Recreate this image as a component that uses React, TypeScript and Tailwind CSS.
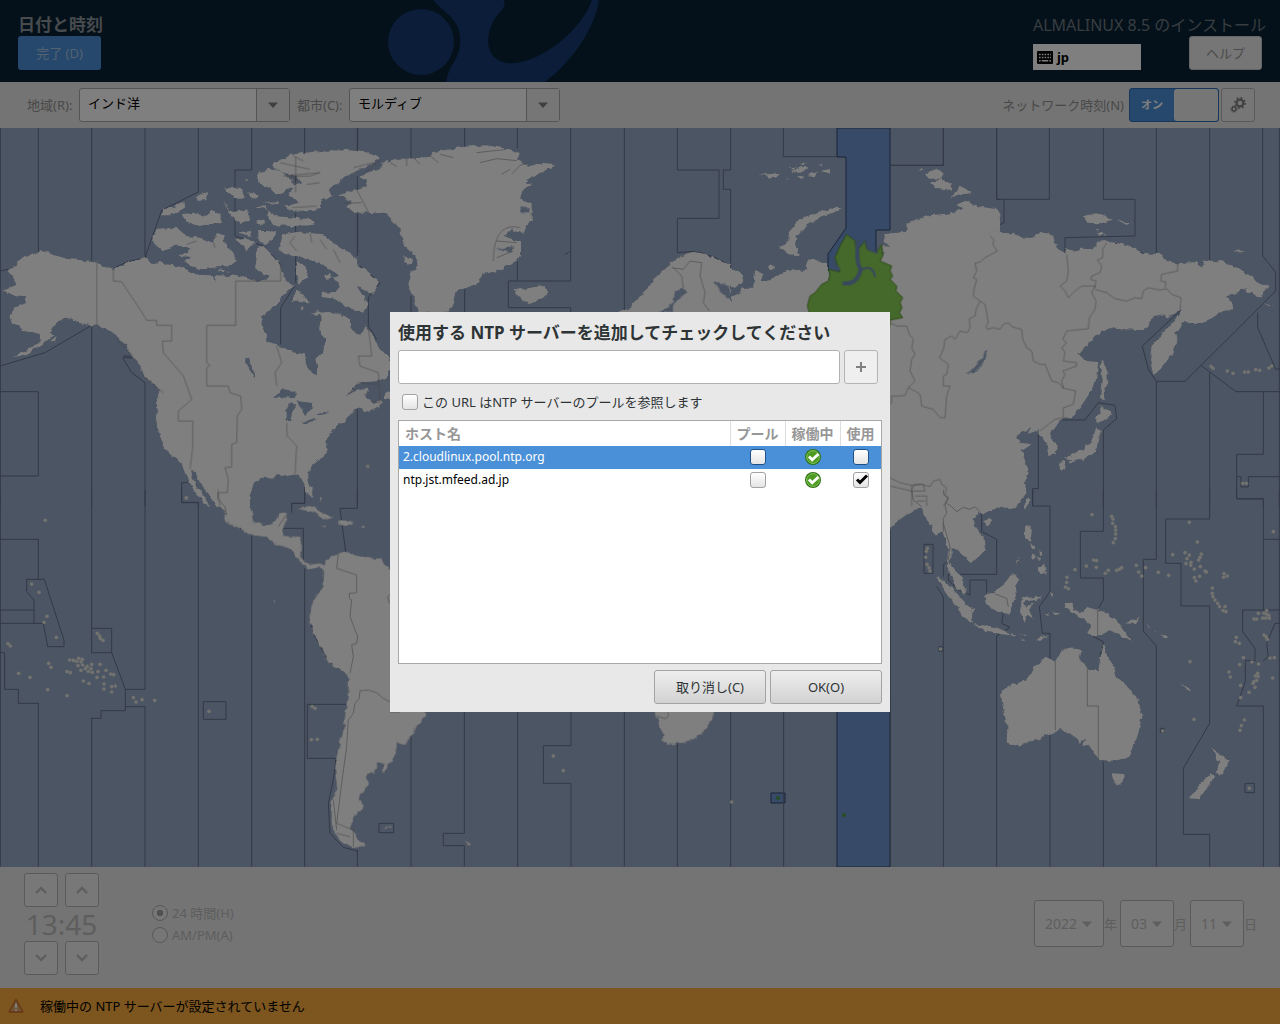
import React, { useState } from "react";

type Region = {
  at: string;
  land: string[];
  water?: string;
  zones: string;
  borders?: string;
  dots?: number[][];
};

/* Each region is drawn at three units per map pixel. */
const regions: Region[] = [
  {
    at: "translate(0 126) scale(0.33333)",
    land: [
      "M25,432 L55,418 L50,408 L75,390 L100,385 L115,378 L128,374 L140,382 L165,388 L200,398 L240,402 L290,410 L320,422 L340,428 L365,420 L380,410 L410,402 L425,400 L435,395 L445,405 L460,415 L480,405 L500,415 L540,420 L560,432 L575,440 L600,442 L640,440 L650,432 L665,430 L700,445 L735,455 L770,465 L800,460 L810,450 L780,440 L765,425 L770,400 L765,380 L775,365 L790,360 L805,375 L825,395 L840,415 L845,440 L855,462 L885,478 L870,490 L845,515 L820,545 L800,555 L785,575 L785,600 L795,620 L800,645 L830,655 L860,670 L885,680 L915,685 L918,715 L935,740 L950,745 L952,725 L945,700 L965,680 L975,665 L975,640 L960,620 L955,600 L965,580 L960,560 L985,558 L1010,560 L1030,570 L1050,580 L1055,605 L1070,625 L1090,620 L1100,600 L1110,620 L1125,640 L1135,665 L1150,680 L1170,690 V740 L1155,755 L1135,765 L1100,768 L1080,770 L1060,785 L1040,810 L1070,790 L1105,785 L1100,800 L1100,815 L1120,830 L1145,825 L1150,832 L1120,850 L1095,862 L1090,845 L1070,850 L1045,868 L1035,885 L1010,900 L985,925 L975,945 L985,960 L980,980 L960,1000 L935,1020 L925,1045 L925,1065 L935,1090 L935,1110 L920,1105 L912,1075 L905,1055 L890,1045 L860,1050 L830,1048 L815,1060 L785,1058 L760,1070 L752,1090 L750,1145 L655,1145 L640,1125 L620,1100 L600,1070 L585,1040 L570,1028 L575,1050 L590,1080 L610,1110 L625,1140 L612,1135 L600,1110 L580,1090 L565,1060 L550,1020 L530,1000 L510,985 L495,970 L485,940 L475,915 L468,880 L472,850 L470,820 L480,790 L450,765 L435,750 L430,740 L410,700 L395,690 L380,660 L350,630 L325,610 L300,600 L275,598 L235,590 L215,578 L195,575 L175,585 L160,605 L150,620 L160,628 L145,640 L120,660 L95,675 L70,690 L40,692 L100,660 L118,650 L120,628 L95,620 L70,615 L60,600 L35,590 L28,570 L45,545 L75,530 L78,512 L50,512 L10,495 L30,485 L50,475 L40,455 Z",
      "M820,110 L880,85 L960,75 L1040,72 L1110,80 L1140,95 L1120,110 L1080,130 L1040,150 L1010,175 L985,190 L995,210 L960,225 L960,250 L900,255 L860,250 L850,240 L900,230 L880,215 L865,205 L880,190 L860,180 L905,170 L890,150 L850,140 L820,125Z",
      "M768,150 L800,125 L840,135 L875,160 L885,175 L860,190 L850,205 L820,200 L800,180 L780,180Z",
      "M490,255 L550,230 L555,245 L520,265 L485,265Z M585,210 L625,198 L620,222 L590,225Z",
      "M545,265 L580,260 L615,270 L635,248 L665,270 L665,288 L600,300 L560,290Z",
      "M680,250 L700,258 L745,250 L750,285 L720,288 L700,275Z M670,185 L720,185 L735,215 L705,215Z M745,198 L780,210 L770,220 L750,212Z M765,245 L800,248 L790,238Z M728,160h12v6z M668,225 L690,252 L680,245Z M790,228 L835,225 L830,235Z",
      "M805,250 L825,270 L880,275 L940,280 L940,298 L880,300 L820,298 L805,275Z M770,280 L795,285 L790,297 L770,292Z",
      "M470,308 L530,305 L560,330 L530,355 L510,365 L490,378 L465,355 L455,345Z",
      "M530,345 L560,330 L600,335 L640,350 L650,325 L675,325 L670,345 L700,380 L710,405 L690,420 L640,425 L600,432 L550,405 L575,392 L535,390 L575,370 L530,358Z",
      "M705,340 L735,335 L770,350 L740,370Z M715,322 L755,318 L750,332Z M775,315 L825,315 L820,340 L795,358 L775,335Z",
      "M835,370 L850,325 L890,318 L970,325 L1010,360 L1060,385 L1080,420 L1110,445 L1140,470 L1120,505 L1070,480 L1105,535 L1090,560 L1060,550 L1020,530 L1000,515 L965,510 L965,500 L1010,498 L1020,480 L1000,455 L1020,450 L960,410 L920,400 L860,385Z",
      "M890,405 L925,430 L920,455 L895,475 L885,430Z M870,530 L895,495 L930,530 L900,525Z M970,450 L990,440 L995,455 L975,458Z M900,550 l12,-6 2,8z M935,562 l20,-6 12,6 -16,4z",
      "M150,645 l20,-15 -5,20Z M1155,800 L1170,795 V820 L1155,815Z M960,1115 l4,8 -3,6z",
    ],
    water:
      "M815,815 L850,790 L885,795 L890,812 L850,815Z M890,825 L935,830 L940,845 L915,870 L905,850Z M870,830 L885,835 L870,885 L860,885 L860,850Z M905,888 L950,875 L940,885 L915,892Z M950,865 L985,855 L975,865 L955,868Z M735,700 L748,698 L765,745 L765,758 L750,735Z M560,430 L640,436 L700,440 L690,450 L648,448 L645,470 L638,448 L590,446Z M740,430 L770,438 L765,452 L745,448Z",
    zones:
      "M1,6V1140 M115,6V378 M0,797H115V1050H0 M275,6V405 M435,6V395 M595,6V198L485,253L435,395 M755,6V132H705V330L790,360L842,415 M914,6V92H887V170 M1072,6V75 M1072,150V390 M0,720L135,680L275,598V1140 M370,695H405 M368,695L395,740L435,770V1140 M575,1070H545V1130H595V1140 M1072,850V1140 M914,1060V1132H875V1140 M1080,420L1140,470L1105,515V600L1130,640 M842,655V545L885,478 M340,428L380,408L435,395 M887,260V470 M0,435L25,430 M340,610L405,670V690H370",
    borders:
      "M290,410V598 M340,428V465L365,467L380,490L420,550L440,583L470,583V598H515V645H487L490,680L550,750L575,820L535,855V885H578V965L570,1028 M842,415V465H707V598H620V710L630,718L620,725V780H685L690,800L722,810L725,850L712,870L710,950L695,955V1023L675,1025L685,1060L682,1100L655,1100L660,1140 M830,660L845,710L825,740L830,780 M860,890L862,930L890,960L885,1045 M887,92V200 M1105,600L1115,690L1075,690L1080,720L1135,740L1140,830L1110,825 M1040,810L1075,770L1140,775 M840,110L930,130 M850,150L960,140L930,150L860,152 M1060,125L1120,110 M920,175L960,170 M880,90L910,105 M885,330L870,350L890,375 M960,340L980,370 M930,320L935,350 M640,350L645,365 M590,345L560,355 M1000,370L1020,410 M350,640L400,690 M430,750L490,800 M875,245L950,240",
    dots: [[1103, 1021], [559, 1115]],
  },
  {
    at: "translate(330 126) scale(0.33333)",
    land: [
      "M28,208 L60,195 L85,188 L110,180 L110,160 L88,158 L110,140 L150,130 L155,110 L200,98 L240,98 L300,92 L310,78 L360,70 L400,62 L470,58 L530,68 L570,85 L560,100 L600,120 L640,110 L675,115 L640,140 L600,155 L590,165 L605,175 L580,195 L570,220 L605,235 L605,285 L590,300 L580,325 L545,310 L520,330 L570,345 L570,390 L555,410 L500,435 L460,445 L440,475 L400,488 L375,500 L370,530 L350,560 L265,560 L255,530 L235,480 L240,440 L265,420 L250,380 L225,360 L210,310 L190,285 L170,265 L120,258 L80,262 L50,245 L65,228Z",
      "M220,390 L250,400 L245,415 L222,408Z",
      "M550,485 L575,490 L600,485 L640,480 L655,498 L640,515 L600,532 L570,520 L560,500Z",
      "M865,560 L900,545 L940,500 L970,460 L1010,425 L1030,405 L1060,385 L1090,378 L1130,385 L1160,400 L1200,418 V600 H860Z",
    ],
    water:
      "M990,560 L1030,525 L1035,495 L1060,488 L1072,498 L1050,515 L1030,535 L1028,560Z M1148,465 L1200,480 V520 L1175,500Z M570,240 L600,245 L600,262 L575,262Z M585,190 L605,195 L595,225 L580,210Z M500,370 L550,360 L540,380Z",
    zones:
      "M83,6V75 M83,262V380 M243,6V95 M243,510V560 M404,6V62 M404,490V560 M562,6V68 M562,405V465 M722,6V465H535V545H722V560 M883,6V560 M1042,6V132H1167V277H1042V380L1090,376L1150,392L1200,418 M705,385L718,378",
    borders:
      "M78,188L115,258 M490,405C490,340 510,290 570,305 M1025,425 L1060,430 L1080,405 L1115,410 L1110,450 L1125,500 L1120,530 L1138,555 M1030,425L1055,450L1060,485 M450,110L500,98L560,104 M545,145L570,118L590,112 M180,110L200,122 M230,98V120 M250,95L270,115 M295,85L325,110 M330,85L370,95 M440,80L530,70 M500,345L560,350 M500,395L550,375 M45,232L95,230 M150,102L105,140 M515,145L540,130",
  },
  {
    at: "translate(700 126) scale(0.33333)",
    land: [
      "M0,385 L30,395 L90,425 L125,445 L130,465 L110,482 L70,478 L40,465 L65,490 L65,505 L95,525 L95,512 L120,500 L125,485 L160,485 L165,435 L190,445 L180,465 L200,465 L260,435 L320,430 L325,400 L380,412 L388,440 L390,470 L545,470 L540,410 L555,415 L560,390 L540,360 L572,362 L555,325 L620,318 L620,290 L680,272 L770,260 L795,245 L770,235 L800,225 L830,240 L900,262 V600 H0Z",
      "M240,365 L265,345 L265,320 L300,280 L350,260 L410,242 L425,250 L370,270 L320,295 L290,330 L285,355 L300,388 L265,385Z",
      "M175,145 l40,0 -10,5z M205,145 L240,140 L225,155 L200,156Z M270,137 l35,-14 20,0 -15,14z M325,147 l25,-10 -8,14z M360,135 l28,-6 -2,12z M290,155 l22,-5 -3,12z M265,128 l25,-5 -10,8z M300,118 l20,-8 -6,10z M252,155h10v4z M355,113h14v4z",
      "M205,423 a10,8 0 1,0 20,0 a10,8 0 1,0 -20,0Z",
    ],
    zones: "M92,6V132H70V190H92V425L0,378 M250,6V92H412 M572,118H730V6 M890,6V220H900",
  },
  {
    at: "translate(880 126) scale(0.33333)",
    land: [
      "M10,325 L80,318 L80,290 L150,268 L215,262 L250,248 L230,238 L255,225 L290,240 L350,250 L365,270 L350,290 L275,340 L350,300 L360,320 L400,322 L430,335 L465,335 L475,320 L520,328 L530,365 L555,385 L560,368 L580,375 L600,368 L640,370 L650,348 L680,345 L745,358 L790,382 L845,385 L860,405 L890,412 L950,408 L965,425 L975,402 L1035,408 L1080,430 L1120,455 L1130,470 L1170,480 L1150,500 L1145,515 L1110,500 L1080,485 L1070,505 L1035,510 L1055,525 L1060,550 L1030,555 L990,580 L960,590 L910,592 L885,620 L890,645 L875,685 L850,720 L820,750 L810,700 L815,660 L860,610 L890,575 L905,550 L860,578 L855,565 L825,570 L800,605 L780,612 L700,608 L665,615 L635,640 L595,685 L620,705 L655,708 L648,760 L630,800 L600,845 L575,872 L545,880 L510,925 L530,955 L528,985 L505,990 L500,955 L480,925 L478,912 L440,925 L455,902 L405,935 L420,950 L455,955 L425,975 L445,1030 L435,1070 L440,1100 L405,1145 H0 V395 L15,380 L30,362 L12,345Z",
      "M138,145 L170,128 L190,145 L185,158 L150,158Z M150,170 L185,160 L215,175 L212,192 L165,185Z M215,212 L240,180 L275,198 L250,208Z M110,129h16v3z",
      "M612,270 L645,262 L680,270 L695,282 L660,292 L620,290Z M710,282 L758,290 L735,293Z M650,318 L680,325 L660,330Z M645,309h10v5z",
      "M1057,380 L1075,370 L1095,378Z M1150,532 l35,8 -20,-1z",
      "M668,700 L680,730 L685,775 L670,790 L675,825 L663,820 L668,760 L660,720Z",
      "M660,838 L700,865 L680,880 L650,892 L645,875 L662,865Z",
      "M650,900 L662,915 L655,950 L640,980 L605,1000 L570,1000 L555,995 L600,975 L635,945Z",
      "M536,1008 L557,1005 L552,1030 L542,1034Z M565,1005 L592,1000 L572,1016Z M438,1122 L448,1115 L440,1145Z",
    ],
    water: "M318,672 C325,705 295,745 260,742 C290,728 300,700 318,672Z M320,325 L370,305 L340,318Z",
    zones:
      "M30,118H190V6 M350,6V220H508V6 M372,220V290L275,338 M670,6V220H765V330L555,335V385 M829,6V380 M989,6V405 M1148,6V390L1187,438V495L915,766H829L805,730L787,660L905,550 M829,766V1140 M963,718L1068,797H1200 M989,740V1140 M1133,560V605L1187,730L1200,728 M1150,797V985H1070V1052H1083V1083H1105V1052H1200 M1070,1052V1118H1150V1140 M545,882H615L655,830L705,838L710,878L670,912V1140 M475,925V1088H458V1140 M1198,6V1140 M700,350L790,382",
    borders:
      "M330,330L342,342L338,355L352,375L315,395L300,408L285,412L290,435L280,455L290,460L282,490L280,510L300,525L315,535L320,560L325,590L318,600L322,610L340,605L360,610L370,595L385,590L395,602L425,610L428,640L440,665L455,675L460,705L480,715L495,715L515,765L535,770L550,785L545,765L555,745L548,735L590,720V710L550,705L555,680L545,665L560,650L548,640L560,615L625,608L628,575L645,550L648,525L635,500L645,480L605,480L585,495L565,515L555,495L540,480L560,465L565,435L560,385 M645,490L680,500L705,518L740,525L765,515L785,518L790,495L805,485L840,492L860,488L875,505L903,515L900,555 M680,350L668,370L668,395L652,402L665,420L660,440L635,450L632,460L648,465L645,485 M893,410V435L845,445L842,465L858,468L855,485 M300,525L288,550L285,570L268,578L270,605L262,620L240,615L225,640L215,630L195,640L190,670L178,695L205,715L200,745L190,750V780H210L200,810L195,875L180,875L160,850L125,840L120,805L105,795L85,785L75,808L60,810H35V830L30,835 M30,590L50,600L80,600L88,625L100,640L95,665L105,685L95,700L90,735L105,765L85,785 M545,785L587,795L580,835L550,845V875L525,880L505,895L480,915 M30,1055L60,1070L95,1078L125,1075L150,1082L160,1065L180,1060L185,1075L200,1085L195,1105L205,1115L190,1140 M95,1078V1140 M30,1080L95,1095L135,1095L130,1075H105L95,1090 M105,1110H140V1140 M110,1125H135",
    dots: [[993, 721], [999, 727], [1042, 735], [1059, 742], [1094, 738], [1105, 738], [1127, 731], [1139, 733], [1167, 726], [1175, 720], [1088, 1072], [1099, 1072]],
  },
  {
    at: "translate(880 490) scale(0.33333)",
    land: [
      "M0,-10 L430,-10 L425,10 L400,30 L350,50 L330,65 L300,68 L275,90 L290,120 L310,140 L315,175 L295,200 L275,220 L240,185 L215,172 L215,200 L205,215 L240,255 L260,300 L250,312 L225,290 L200,225 L205,180 L190,125 L165,138 L155,110 L130,70 L125,50 L100,65 L60,85 L30,120 L0,120Z",
      "M310,97 L325,86 L334,94 L322,108Z M445,22 L450,32 L438,60 L432,45Z",
      "M168,262 L195,275 L235,315 L280,365 L278,398 L250,380 L215,330Z",
      "M280,402 L340,410 L375,422 L388,436 L320,425Z",
      "M315,312 L340,310 L370,285 L395,252 L418,268 L405,290 L408,320 L385,372 L340,362 L320,340Z",
      "M425,325 L480,320 L487,312 L480,328 L432,335 L438,352 L458,340 L447,362 L462,388 L442,374 L434,398 L420,365Z",
      "M435,108 L455,110 L455,130 L450,152 L435,145Z M470,240 L492,218 L498,250 L480,252Z M450,160 l12,5 -5,12z M478,178 l10,12 -8,6z M455,190 l12,8 -8,12z M472,198 l10,6 -8,10z M425,202 L405,225 L412,212Z",
      "M468,450 L505,432 L480,454Z M390,430 L412,434 L390,437Z M415,434h22v4z M418,444 l20,6 -8,3z M495,370h12v5z M515,366 l30,6 -20,3z M510,305 l10,8 -4,14z M272,350 l14,10 -6,6z",
      "M550,340 L578,338 L580,355 L600,370 L620,350 L680,370 L715,400 L755,455 L715,435 L690,420 L650,440 L625,430 L630,405 L595,378 L570,365Z",
      "M735,400 L780,382 L765,402Z M800,402 l12,10 -6,-2z M822,418 l8,8 -4,-1z M840,435 l20,-2 6,12 -8,-4z",
      "M362,605 L395,585 L440,570 L465,530 L500,500 L525,515 L545,480 L560,472 L605,480 L598,510 L630,540 L655,540 L668,462 L685,505 L700,525 L710,560 L745,590 L775,630 L787,680 L775,730 L748,803 L700,812 L655,810 L630,770 L610,765 L618,745 L600,760 L580,735 L545,720 L505,732 L470,750 L400,768 L380,755 L382,710 L368,650Z",
      "M695,850 L732,852 L727,872 L712,887 L702,875Z",
      "M995,768 L1020,798 L1052,808 L1022,857 L1005,845 L1018,820Z",
      "M990,850 L1005,858 L960,928 L930,925 L950,895Z",
      "M903,578 L932,600 L926,604Z",
    ],
    zones:
      "M31,120V1130 M170,290L190,320V1130 M350,438V1130 M458,0V48H510V305L478,350L487,430H510V1130 M670,0V124H601V264H670V330L655,355 M670,815V1130 M829,0V208H790V423L829,468V1130 M989,0V87H857V220H903V348H989V700L910,835V1033H989V1130 M1070,0V27H1150V360 M1150,148H1200 M1200,360H1088V425L1125,475V512H1096V575L1070,648H1150V1130 M1150,512L1165,500L1160,460L1185,400H1200 M132,163H159V250H132Z M305,70V125L350,148V253H205V270L235,300L270,315V270H320V310 M1095,880H1123V908H1095Z M841,715H852V727H841Z M177,470H187V484H177Z M1198,0V1130 M370,370L365,400L390,412L350,438 M190,260V225L200,215 M640,440L670,455L660,500",
    borders:
      "M526,515V720 M622,530V648H655V810 M653,358V440 M95,0L100,30L125,50 M190,0L192,15L205,25L195,45L200,70L190,85V125 M200,40L215,50L230,65L250,52L270,58L285,50L300,65 M345,312L380,325L385,350 M190,100L210,170L205,210",
    dots: [[636, 74], [695, 79], [699, 87], [698, 100], [706, 110], [707, 120], [707, 132], [706, 146], [700, 158], [641, 210], [650, 212], [619, 228], [649, 232], [585, 239], [561, 262], [560, 277], [556, 291], [565, 296], [676, 250], [685, 241], [710, 241], [718, 238], [725, 233], [769, 226], [797, 233], [776, 246], [785, 258], [835, 247], [866, 256], [878, 194], [928, 97], [952, 156], [915, 188], [928, 195], [921, 206], [933, 217], [918, 221], [932, 226], [964, 192], [960, 202], [956, 210], [943, 237], [961, 230], [975, 243], [979, 246], [959, 259], [943, 263], [948, 273], [1032, 251], [1042, 258], [1031, 262], [997, 294], [997, 310], [999, 320], [1005, 330], [1013, 340], [1019, 350], [1035, 350], [1029, 362], [1038, 365], [1069, 442], [1066, 455], [1078, 460], [1090, 503], [1116, 516], [1136, 522], [1079, 524], [1047, 546], [1051, 561], [1082, 586], [1133, 550], [1126, 558], [1134, 559], [1130, 571], [1122, 575], [1119, 580], [1125, 592], [1107, 607], [1082, 623], [1093, 690], [1084, 707], [1080, 721], [942, 688], [848, 723], [1108, 895], [1180, 125], [1135, 370], [1152, 370], [1160, 362], [1160, 372], [1166, 376], [1148, 384], [1157, 384], [1168, 384], [1122, 387], [1130, 387], [1152, 435], [1158, 440], [1162, 448], [1170, 504], [1183, 503], [1178, 564], [142, 175], [139, 184], [137, 202], [141, 223], [147, 233], [150, 243], [182, 477], [930, 515]],
  },
  {
    at: "translate(0 490) scale(0.33333)",
    land: [
      "M625,-10 L752,-10 L752,60 L765,98 L800,108 L825,95 L835,72 L865,70 L850,110 L850,138 L900,140 L908,165 L900,200 L925,225 L945,218 L970,225 L990,200 L1010,195 L1040,185 L1060,195 L1110,205 L1140,205 L1170,240 L1190,260 V770 L1188,780 L1175,815 L1130,822 L1125,850 L1100,850 L1105,880 L1075,925 L1092,950 L1060,980 L1055,1020 L1075,1050 L1100,1065 L1060,1075 L1030,1060 L1005,1030 L995,1000 L995,930 L1012,900 L1005,840 L1010,800 L1030,720 L1045,600 L1045,555 L985,515 L945,440 L928,385 L935,340 L970,290 L972,245 L955,228 L930,240 L900,215 L870,175 L820,160 L800,140 L765,138 L700,110 L672,90 L675,65 L650,35Z",
      "M590,0 L605,5 L627,48 L612,38 L595,10Z M918,-10 L938,-10 L936,20 L925,15Z",
      "M893,57 L930,48 L1000,83 L975,88 L935,65Z M1015,92 L1060,98 L1040,108 L1015,103Z M960,107h18v5z M1078,107h16v4z M960,22 l6,4 -2,6z M820,330h4v12z M1148,1018 l8,-10 4,6z M1160,1016 l12,-8 2,6z",
    ],
    zones:
      "M1,0V1130 M115,638V1130 M275,0V415H335V488H275V415 M275,685V1130 M435,0V598H376V662H303V685H272 M376,650H435V1130 M595,37V1130 M755,138V1130 M914,235V1130 M1072,1080V1130 M0,148H115V268 M80,268H133L192,450V470H143L130,400H0 M80,268V305L102,330V400 M0,360H102 M335,488L376,598 M0,488H14V598H55V640H115 M610,635H678V688H610Z M1040,643H922V805H1008L1000,870L985,940L990,1030L1030,1072L1072,1083 M545,0V37H595 M914,0V40H875V68 M1072,0V55H1020L1037,185 M850,115H910V220 M1137,1000H1181V1028H1137Z M672,90L765,138 M928,385L945,440L985,515L1045,555",
    borders:
      "M1015,190L1010,235L1070,255V308L1048,310V325L1055,330L1050,380L1073,440L1070,460L1055,465L1060,500L1050,550 M1170,635L1150,625L1130,608L1105,600L1080,602L1078,625L1065,640L1060,670L1045,690L1040,770L1025,880L1015,960L1010,1000L1060,1020V1070 M835,110L860,72 M655,0L652,25L675,50L680,75 M1170,315L1163,320L1168,340 M1000,930L1010,1020 M1010,1030L1050,1040",
    dots: [[136, 91], [95, 282], [117, 307], [141, 379], [132, 397], [169, 442], [24, 461], [31, 468], [292, 430], [299, 438], [301, 445], [309, 451], [146, 520], [153, 532], [56, 550], [90, 562], [209, 510], [220, 511], [230, 514], [236, 505], [247, 508], [243, 516], [234, 527], [248, 525], [262, 529], [275, 523], [256, 536], [243, 541], [265, 544], [273, 536], [277, 547], [294, 545], [300, 523], [318, 541], [332, 552], [341, 554], [311, 561], [291, 562], [201, 545], [211, 548], [250, 573], [267, 580], [312, 582], [312, 597], [335, 590], [346, 588], [335, 606], [143, 599], [201, 617], [400, 623], [408, 636], [426, 629], [464, 631], [627, 664], [937, 650], [945, 655], [934, 749], [952, 748], [559, 24]],
  },
  {
    at: "translate(390 640) scale(0.33333)",
    land: [
      "M-20,200 H105 V225 L95,240 L60,290 L45,315 L10,305 L-2,295 L0,315 L18,335 L10,355 L-20,400Z",
      "M787,200 H975 L965,245 L930,285 L895,305 L832,315 L818,300 L820,285Z",
      "M223,600 l16,10 -4,4z",
    ],
    zones:
      "M63,290V680 M223,200V580H160V617H223V680 M383,200V680 M543,200V317H460V430H543V680 M703,200V680 M862,310V680 M1022,200V680 M1181,200V680",
    borders: "M800,228L825,236L835,230V216 M0,216L30,216",
    dots: [[490, 348], [520, 392], [1025, 486]],
  },
];

function WorldMap() {
  return (
    <svg
      viewBox="0 128 1280 739"
      className="block w-full bg-[#99aac8]"
      role="img"
      aria-label="タイムゾーン"
    >
      <defs>
        <filter id="coast" x="-2%" y="-2%" width="104%" height="104%">
          <feTurbulence type="fractalNoise" baseFrequency="0.16" numOctaves="2" seed="4" />
          <feDisplacementMap in="SourceGraphic" scale="5" xChannelSelector="R" yChannelSelector="G" result="edge" />
          <feDropShadow in="edge" dx="0" dy="0" stdDeviation="0.4" floodColor="#2c3444" floodOpacity="0.5" />
        </filter>
        <filter id="wobble" x="-2%" y="-2%" width="104%" height="104%">
          <feTurbulence type="fractalNoise" baseFrequency="0.2" numOctaves="2" seed="9" />
          <feDisplacementMap in="SourceGraphic" scale="4" xChannelSelector="R" yChannelSelector="G" />
        </filter>
      </defs>
      <g fill="#6e94ce" stroke="#33496f">
        <path d="M837,128 H890 V230 H876 V285 H828 V254 L846,228 V157 H837Z" />
        <path d="M837,700 H890 V867 H837Z" />
        <path d="M771,793 H785 V803 H771Z" />
      </g>
      {regions.map((r) => (
        <path key={r.at} transform={r.at} d={r.zones} fill="none" stroke="#64718c" strokeWidth="3" />
      ))}
      <g filter="url(#coast)" fill="#ffffff">
        {regions.map((r) => (
          <g key={r.at} transform={r.at}>
            {r.land.map((d) => (
              <path key={d} d={d} />
            ))}
          </g>
        ))}
      </g>
      <g filter="url(#wobble)" fill="#99aac8">
        {regions.map((r) => (r.water ? <path key={r.at} transform={r.at} d={r.water} /> : null))}
      </g>
      {regions.map((r) => (
        <path key={r.at} transform={r.at} d={r.borders} fill="none" stroke="#8c8c8c" strokeWidth="1.8" strokeLinejoin="round" />
      ))}
      <g transform="translate(700 126) scale(0.33333)">
        <g filter="url(#wobble)">
          <path
            d="M385,430 L420,438 L405,395 L420,360 L440,325 L465,345 L470,400 L478,400 L475,370 L495,345 L500,370 L530,380 L545,355 L548,390 L540,405 L575,420 L570,435 L578,450 L570,460 L590,480 L588,495 L608,515 L600,530 L606,545 L598,560 L608,575 L570,582 V600 H325 L328,560 L322,540 L330,510 L345,500 L365,475 L385,465 L390,445Z"
            fill="#88d254"
            stroke="#5c9438"
            strokeWidth="3"
          />
          <g fill="none" stroke="#7392bb" strokeLinecap="round">
            <path d="M472,345 C475,380 465,400 482,430 C475,460 460,475 432,472" strokeWidth="12" />
            <path d="M485,432 C510,415 522,435 525,450 M498,350 L505,370 L530,380" strokeWidth="6" />
            <path d="M402,410 L416,430" strokeWidth="9" />
          </g>
        </g>
      </g>
      <g fill="#e4e4dc">
        {regions.map((r) => (
          <g key={r.at} transform={r.at}>
            {r.dots?.map(([x, y]) => (
              <circle key={`${x}-${y}`} cx={x} cy={y} r="5.5" />
            ))}
          </g>
        ))}
      </g>
      <g fill="#4f9a4a">
        <circle cx="778" cy="798" r="2" />
        <circle cx="844" cy="815" r="2" />
      </g>
    </svg>
  );
}

function Triangle({ className = "" }: { className?: string }) {
  return (
    <svg viewBox="0 0 10 6" className={`h-1.5 w-2.5 ${className}`} fill="currentColor" aria-hidden="true">
      <path d="M0,0.5 H10 L5,6Z" />
    </svg>
  );
}

function Combo({ id, value }: { id: string; value: string }) {
  return (
    <div className="relative h-[34px] w-[211px]">
      <select
        id={id}
        defaultValue={value}
        className="h-full w-full appearance-none rounded-[3px] border border-[#a8a8a8] bg-white pb-1 pl-2 text-[13px] text-black"
      >
        <option>{value}</option>
      </select>
      <span className="pointer-events-none absolute inset-y-px right-px flex w-[33px] items-center justify-center border-l border-[#a8a8a8] bg-[#ececec] text-[#808080]">
        <Triangle />
      </span>
    </div>
  );
}

function SpinButton({ up, label }: { up?: boolean; label: string }) {
  return (
    <button
      type="button"
      aria-label={label}
      className="flex size-[34px] items-center justify-center rounded-[3px] border border-[#b4b4b4] bg-[#f0f0f0] text-[#bcbcbc]"
    >
      <svg viewBox="0 0 12 8" className="h-2 w-3" fill="none" stroke="currentColor" strokeWidth="2.4" aria-hidden="true">
        <path d={up ? "M1,7 L6,2 L11,7" : "M1,1 L6,6 L11,1"} />
      </svg>
    </button>
  );
}

function DateSelect({ value, unit, wide }: { value: string; unit: string; wide?: boolean }) {
  return (
    <label className="flex items-center">
      <span className={`relative block h-[47px] ${wide ? "w-[70px]" : "w-[54px]"}`}>
        <select
          defaultValue={value}
          className="h-full w-full appearance-none rounded-[3px] border border-[#b4b4b4] bg-[#f0f0f0] pl-2.5 text-[14px] text-[#bebebe]"
        >
          <option>{value}</option>
        </select>
        <Triangle className="pointer-events-none absolute right-3 top-[21px] text-[#bebebe]" />
      </span>
      <span className="w-4 text-[13px] text-[#bcbcbc]">{unit}</span>
    </label>
  );
}

function Check({ label, checked, strong, id }: { label?: string; checked?: boolean; strong?: boolean; id?: string }) {
  const [on, setOn] = useState(!!checked);
  return (
    <span className="relative inline-block size-4 align-middle">
      <input
        id={id}
        type="checkbox"
        aria-label={label}
        checked={on}
        onChange={() => setOn(!on)}
        className={`block size-4 appearance-none rounded-[3px] border bg-linear-to-b from-white to-[#e4e4e4] ${
          strong ? "border-[#1c5187]" : "border-[#a2a2a2]"
        }`}
      />
      {on && (
        <svg viewBox="0 0 16 16" className="pointer-events-none absolute inset-0 size-4" fill="none" stroke="#000" strokeWidth="3" aria-hidden="true">
          <path d="M4,7.5 L7,10.5 L14,3.5" />
        </svg>
      )}
    </span>
  );
}

function Working() {
  return (
    <svg viewBox="0 0 16 16" className="mx-auto block size-4" role="img" aria-label="稼働中">
      <circle cx="8" cy="8" r="8" fill="#2f7410" />
      <circle cx="8" cy="8" r="6.4" fill="#4b9c20" stroke="#9ad07a" strokeWidth="0.8" />
      <path d="M4,7.5 L7.2,10.8 L13.5,5" fill="none" stroke="#fff" strokeWidth="2.8" />
    </svg>
  );
}

const servers = [
  { host: "2.cloudlinux.pool.ntp.org", use: false, selected: true },
  { host: "ntp.jst.mfeed.ad.jp", use: true, selected: false },
];

function NtpDialog() {
  return (
    <div className="fixed inset-0 flex items-center justify-center bg-black/50">
      <section role="dialog" aria-modal="true" aria-labelledby="ntp-title" className="flex h-[400px] w-[500px] flex-col bg-[#e8e8e8] p-2 text-[#2e3436]">
        <h2 id="ntp-title" className="h-[30px] text-[17px] leading-[26px] font-bold whitespace-nowrap">
          使用する NTP サーバーを追加してチェックしてください
        </h2>
        <div className="flex gap-1 pr-1">
          <input aria-label="NTP サーバー" className="h-[34px] min-w-0 flex-1 rounded-[3px] border border-[#b0b0b0] bg-white px-2 text-[13px]" />
          <button type="button" aria-label="追加" className="flex size-[34px] items-center justify-center rounded-[3px] border border-[#b4b4b4] bg-[#efefef]">
            <svg viewBox="0 0 10 10" className="size-2.5" stroke="#808080" strokeWidth="2" aria-hidden="true">
              <path d="M5,0 V10 M0,5 H10" />
            </svg>
          </button>
        </div>
        <div className="flex h-9 items-center gap-1 pl-1">
          <Check id="pool" />
          <label htmlFor="pool" className="text-[13px]">この URL はNTP サーバーのプールを参照します</label>
        </div>
        <div className="flex-1 border border-[#a8a8a8] bg-white">
          <table className="w-full table-fixed border-collapse text-[12px]">
            <colgroup>
              <col />
              <col className="w-[55px]" />
              <col className="w-[55px]" />
              <col className="w-[41px]" />
            </colgroup>
            <thead>
              <tr className="h-[25px] text-left text-[14px] leading-5 text-[#979797]">
                <th className="py-0 pl-1.5 font-bold">ホスト名</th>
                <th className="border-l border-[#dedede] p-0 pl-1.5 font-bold">プール</th>
                <th className="border-l border-[#dedede] p-0 pl-1.5 font-bold">稼働中</th>
                <th className="border-l border-[#dedede] p-0 pl-1.5 font-bold">使用</th>
              </tr>
            </thead>
            <tbody>
              {servers.map((s) => (
                <tr key={s.host} className={s.selected ? "h-[23px] bg-[#4a90d9] leading-5 text-white" : "h-[23px] leading-5 text-black"}>
                  <td className="p-0 pb-0.5 pl-1">{s.host}</td>
                  <td className="p-0 pb-0.5 text-center leading-none"><Check label={`${s.host} プール`} strong={s.selected} /></td>
                  <td className="p-0 pb-0.5"><Working /></td>
                  <td className="p-0 pb-0.5 text-center leading-none"><Check label={`${s.host} 使用`} checked={s.use} strong={s.selected} /></td>
                </tr>
              ))}
            </tbody>
          </table>
        </div>
        <div className="mt-1.5 flex justify-end gap-1 text-[13px]">
          <button type="button" className="h-[34px] w-28 rounded-[3px] border border-[#a4a4a4] bg-linear-to-b from-[#eeeeee] to-[#d2d2d2]">取り消し(C)</button>
          <button type="button" className="h-[34px] w-28 rounded-[3px] border border-[#a4a4a4] bg-linear-to-b from-[#eeeeee] to-[#d2d2d2]">OK(O)</button>
        </div>
      </section>
    </div>
  );
}

export default function App() {
  return (
    <div className="flex min-h-screen flex-col bg-[#e8e8e8] font-['Noto_Sans','Noto_Sans_CJK_JP',sans-serif] text-[13px] leading-5">
      <header className="relative flex h-[82px] justify-between overflow-hidden bg-[#082234] px-[18px] pt-3.5">
        <svg viewBox="388 0 212 82" className="absolute top-0 left-[388px] h-[82px] w-[212px]" fill="#163a70" aria-hidden="true">
          <circle cx="421" cy="42" r="33" />
          <path
            transform="scale(0.4082 0.3333)"
            d="M1062,0 C1080,35 1140,55 1125,150 C1120,180 1095,205 1093,250 H1330 C1400,190 1460,80 1467,0 H1450 C1430,80 1330,190 1250,190 C1180,185 1185,90 1225,35 C1240,18 1236,8 1235,0Z"
          />
        </svg>
        <div className="relative">
          <h1 className="h-[22px] text-[17px] leading-[22px] font-bold text-[#8f979c]">日付と時刻</h1>
          <button type="button" className="h-[34px] w-[83px] rounded-[3px] bg-[#4a90d9] text-[#a9c4e2]">完了 (D)</button>
        </div>
        <div className="relative flex w-[229px] flex-col">
          <p className="h-[22px] text-[16px] leading-[22px] whitespace-nowrap text-[#6f7a82]">ALMALINUX 8.5 のインストール</p>
          <div className="flex items-end justify-between">
            <button type="button" className="flex h-[26px] w-[108px] items-center gap-1 bg-white px-1 font-bold text-black">
              <svg viewBox="0 0 16 13" className="h-[13px] w-4" aria-hidden="true">
                <rect width="16" height="13" rx="1" fill="#000" />
                <path d="M2,3.5 H14 M2,6.5 H14" stroke="#fff" strokeWidth="1.6" strokeDasharray="1.6 1.2" />
                <path d="M2,9.7 H3.6 M4.8,9.7 H11.2 M12.4,9.7 H14" stroke="#fff" strokeWidth="1.6" />
              </svg>
              jp
            </button>
            <button type="button" className="h-[34px] w-[73px] rounded-[3px] border border-[#c8c8c8] bg-[#ececec] text-[#969696]">ヘルプ</button>
          </div>
        </div>
      </header>

      <div className="flex h-[46px] items-center pr-[25px] pl-[27px] text-[#929292]">
        <label htmlFor="region" className="w-[52px] whitespace-nowrap">地域(R):</label>
        <Combo id="region" value="インド洋" />
        <label htmlFor="city" className="ml-[7px] w-[52px] whitespace-nowrap">都市(C):</label>
        <Combo id="city" value="モルディブ" />
        <span id="nettime" className="ml-auto whitespace-nowrap">ネットワーク時刻(N)</span>
        <button
          type="button"
          role="switch"
          aria-checked="true"
          aria-labelledby="nettime"
          className="ml-[5px] flex h-[34px] w-[90px] items-stretch rounded-[3px] border border-[#2c6cb4] bg-[#4a90d9]"
        >
          <span className="flex flex-1 items-center justify-center text-[11px] font-bold text-white">オン</span>
          <span className="w-11 rounded-[3px] bg-[#ededed]" />
        </button>
        <button type="button" aria-label="設定" className="ml-0.5 flex size-[34px] items-center justify-center rounded-[3px] border border-[#b4b4b4] bg-[#ececec]">
          <svg viewBox="0 0 16 16" className="size-4" fill="none" stroke="#808080" aria-hidden="true">
            <circle cx="10" cy="6" r="3.4" strokeWidth="2.2" />
            <circle cx="10" cy="6" r="5.2" strokeWidth="1.6" strokeDasharray="1.8 2.28" />
            <circle cx="4" cy="12" r="2" strokeWidth="1.5" />
            <circle cx="4" cy="12" r="3.2" strokeWidth="1" strokeDasharray="1.2 1.3" />
          </svg>
        </button>
      </div>

      <WorldMap />

      <div className="flex flex-1 items-center justify-between pr-5 pb-2 pl-6 text-[#bcbcbc]">
        <div className="flex items-center">
          <div className="flex flex-col">
            <div className="flex gap-[7px]">
              <SpinButton up label="時を進める" />
              <SpinButton up label="分を進める" />
            </div>
            <div className="flex h-[34px] items-center justify-center text-[28px]">13:45</div>
            <div className="flex gap-[7px]">
              <SpinButton label="時を戻す" />
              <SpinButton label="分を戻す" />
            </div>
          </div>
          <div className="ml-[53px] flex flex-col gap-0.5">
            {["24 時間(H)", "AM/PM(A)"].map((t, i) => (
              <label key={t} className="flex items-center gap-1">
                <input
                  type="radio"
                  name="format"
                  defaultChecked={i === 0}
                  className="size-4 appearance-none rounded-full border border-[#b0b0b0] bg-[#ececec] checked:bg-[radial-gradient(circle,#a0a0a0_3px,#ececec_3.5px)]"
                />
                {t}
              </label>
            ))}
          </div>
        </div>
        <div className="flex">
          <DateSelect value="2022" unit="年" wide />
          <DateSelect value="03" unit="月" />
          <DateSelect value="11" unit="日" />
        </div>
      </div>

      <footer className="flex h-9 items-center gap-4 bg-[#faab3e] px-2 text-black">
        <svg viewBox="0 0 16 16" className="size-4" aria-hidden="true">
          <path d="M8,1.5 L15,14 H1Z" fill="#d9a868" stroke="#d06a2a" strokeWidth="1.4" strokeLinejoin="round" />
          <path d="M8,5.5 V10 M8,11.2 V13" stroke="#fff" strokeWidth="1.8" />
        </svg>
        稼働中の NTP サーバーが設定されていません
      </footer>
      <NtpDialog />
    </div>
  );
}
